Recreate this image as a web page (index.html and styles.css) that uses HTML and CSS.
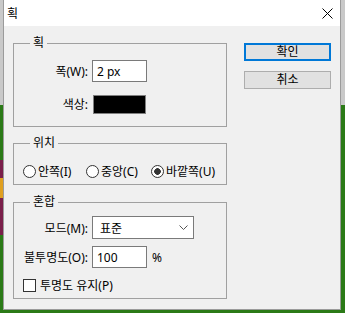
FILE: index.html
```html
<!DOCTYPE html>
<html lang="ko">
<head>
    <meta charset="UTF-8">
    <meta name="viewport" content="width=device-width, initial-scale=1.0">
    <title>획</title>
    <link rel="stylesheet" href="styles.css">
</head>
<body>

    <div class="window">
        <div class="titlebar">
            <span class="title">획</span>
            <svg class="close" width="11" height="11" viewBox="0 0 11 11">
                <path d="M0.5 0.5L10.5 10.5M10.5 0.5L0.5 10.5" stroke="#000" stroke-width="1" fill="none"/>
            </svg>
        </div>

        <div class="content">
            <div class="groups">
                <fieldset class="group group-stroke">
                    <legend>획</legend>
                    <div class="row">
                        <label class="label" for="strokeWidth">폭(W):</label>
                        <input class="text" id="strokeWidth" type="text" value="2 px">
                    </div>
                    <div class="row">
                        <span class="label">색상:</span>
                        <span class="swatch"></span>
                    </div>
                </fieldset>

                <fieldset class="group group-location">
                    <legend>위치</legend>
                    <div class="radios">
                        <label class="radio"><span class="dot"></span>안쪽(I)</label>
                        <label class="radio"><span class="dot"></span>중앙(C)</label>
                        <label class="radio"><span class="dot on"></span>바깥쪽(U)</label>
                    </div>
                </fieldset>

                <fieldset class="group group-blend">
                    <legend>혼합</legend>
                    <div class="row row-mode">
                        <span class="label">모드(M):</span>
                        <div class="select">
                            <span>표준</span>
                            <svg width="9" height="5" viewBox="0 0 9 5">
                                <path d="M0.5 0.5L4.5 4.5L8.5 0.5" fill="none" stroke="#555" stroke-width="1"/>
                            </svg>
                        </div>
                    </div>
                    <div class="row row-opacity">
                        <label class="label" for="opacity">불투명도(O):</label>
                        <input class="text" id="opacity" type="text" value="100">
                        <span class="unit">%</span>
                    </div>
                    <label class="check"><span class="box"></span>투명도 유지(P)</label>
                </fieldset>
            </div>

            <div class="buttons">
                <button class="btn default">확인</button>
                <button class="btn">취소</button>
            </div>
        </div>
    </div>

</body>
</html>
```

FILE: styles.css
```css
* { box-sizing: border-box; }
body {
    margin: 0;
    height: 313px;
    font-family: "Noto Sans", "Noto Sans CJK KR", sans-serif;
    font-size: 12px;
    color: #000;
    background:
        linear-gradient(#e0a020, #e0a020) 0 178px / 3px 20px no-repeat,
        linear-gradient(#7a1f4a, #7a1f4a) 0 160px / 3px 75px no-repeat,
        linear-gradient(to bottom, #c9c9c9 0 105px, #2b7a17 105px);
}

.window {
    margin-left: 3px;
    width: 338px;
    height: 310px;
    background: #f0f0f0;
    border: 1px solid #9b9b9b;
    border-top: 0;
    display: flex;
    flex-direction: column;
}
.titlebar {
    height: 26px;
    flex: none;
    background: #fff;
    display: flex;
    align-items: center;
    justify-content: space-between;
    padding: 0 7px 0 3px;
}
.content { display: flex; padding: 10px 0 0 9px; }

.groups { width: 214px; display: flex; flex-direction: column; }
.group { margin: 0; padding: 0; border: 1px solid #a0a0a0; min-width: 0; }
.group legend { margin-left: 16px; padding: 0 3px; line-height: 14px; }

.group-stroke { padding: 10px 0 11px; }
.group-location { margin-top: 9px; padding: 12px 0 6px; }
.group-blend { margin-top: 10px; padding: 7px 0 5px; }

.row { display: flex; align-items: center; height: 22px; }
.group-stroke .row + .row { margin-top: 11px; }
.row-mode { height: 23px; }
.row-opacity { margin-top: 7px; }

.label { width: 74px; margin-right: 4px; text-align: right; }
.text {
    width: 55px;
    height: 22px;
    border: 1px solid #7a7a7a;
    background: #fff;
    padding: 0 4px;
    font: inherit;
    color: #000;
}
.swatch { width: 53px; height: 19px; margin-left: 1px; background: #000; border: 1px solid #808080; }
.unit { margin-left: 5px; }

.select {
    width: 102px;
    height: 23px;
    border: 1px solid #7a7a7a;
    background: #fff;
    display: flex;
    align-items: center;
    justify-content: space-between;
    padding: 0 5px 0 7px;
}

.radios {
    display: grid;
    grid-template-columns: 63px 65px auto;
    align-items: center;
    height: 16px;
    padding-left: 9px;
}
.radio { display: flex; align-items: center; gap: 2px; }
.dot { width: 13px; height: 13px; border: 1px solid #333; border-radius: 50%; background: #fff; }
.dot.on { background: radial-gradient(circle, #333 0 3px, #fff 3.6px); }

.check { display: flex; align-items: center; gap: 4px; height: 16px; margin-top: 9px; padding-left: 9px; }
.box { width: 13px; height: 13px; border: 1px solid #333; background: #fff; }

.buttons { margin-left: 17px; padding-top: 7px; display: flex; flex-direction: column; gap: 10px; }
.btn {
    width: 87px;
    height: 18px;
    padding: 0;
    border: 1px solid #adadad;
    background: #e1e1e1;
    font: inherit;
    line-height: 14px;
    color: #000;
}
.btn.default { border: 2px solid #0078d7; }
```
